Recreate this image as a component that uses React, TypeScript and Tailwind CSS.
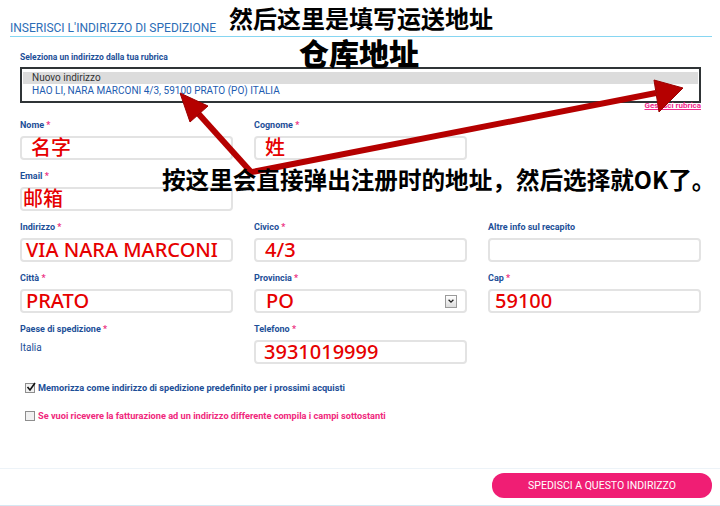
import React from "react";

const UI = { fontFamily: "Roboto, 'Liberation Sans', sans-serif" };
const CJK = { fontFamily: "'Noto Sans CJK SC', 'Noto Sans', sans-serif" };
const TYPED = { fontFamily: "'Noto Sans', 'Noto Sans CJK SC', sans-serif" };

function Label({ text, required = true }: { text: string; required?: boolean }) {
  return (
    <div className="mb-[5px] h-[12px] text-[9px] font-bold leading-[12px] text-[#1d4f98]">
      {text}
      {required && <span className="text-[#ec2f82]"> *</span>}
    </div>
  );
}

function Field({
  label,
  value,
  pad = "pl-[6px]",
  required = true,
  select,
}: {
  label: string;
  value?: string;
  pad?: string;
  required?: boolean;
  select?: boolean;
}) {
  return (
    <div>
      <Label text={label} required={required} />
      <div
        className={`flex h-[24px] items-center rounded-[4px] border-2 border-[#e3e3e3] bg-white ${pad} pr-[8px]`}
      >
        <span
          className="flex-1 whitespace-nowrap text-[20px] font-medium leading-[20px] text-[#e60000]"
          style={TYPED}
        >
          {value}
        </span>
        {select && (
          <span className="flex h-[13px] w-[12px] items-center justify-center border border-[#9a9a9a] bg-gradient-to-b from-white to-[#dcdcdc]">
            <svg viewBox="0 0 10 10" className="h-[8px] w-[8px]" fill="none" stroke="#222" strokeWidth="1.6">
              <path d="M2 3.5 L5 6.5 L8 3.5" />
            </svg>
          </span>
        )}
      </div>
    </div>
  );
}

function Check({ checked, text, color }: { checked?: boolean; text: string; color: string }) {
  return (
    <div className="flex items-center gap-[3px] pl-[5px]">
      <span className="relative h-[10px] w-[10px] border border-[#8e8e8e] bg-[#f1f1f1]">
        {checked && (
          <svg viewBox="0 0 10 10" className="absolute -top-[2px] left-0 h-[10px] w-[10px]" fill="none" stroke="#111" strokeWidth="1.6">
            <path d="M1.5 5 L4 8 L9 1" />
          </svg>
        )}
      </span>
      <span className={`text-[9.2px] font-bold leading-[12px] ${color}`}>{text}</span>
    </div>
  );
}

function Arrows() {
  return (
    <svg className="pointer-events-none absolute inset-0" width="720" height="506" viewBox="0 0 720 506">
      <g fill="#b50000" stroke="#9a0000" strokeWidth="1">
        <line x1="251" y1="172" x2="196" y2="111" stroke="#b50000" strokeWidth="6" />
        <polygon points="180,93 208,106 190,122" />
        <line x1="247" y1="173" x2="656" y2="93" stroke="#b50000" strokeWidth="6" />
        <polygon points="683,88 654,80 659,112" />
      </g>
    </svg>
  );
}

export default function App() {
  return (
    <div className="relative flex h-[506px] w-[720px] flex-col overflow-hidden bg-white" style={UI}>
      {/* header */}
      <div className="ml-[10px] mr-[8px] mt-[21px] border-b border-[#86d6f2]">
        <div className="text-[12px] leading-[15px] text-[#2c6db6]">
          INSERISCI L'INDIRIZZO DI SPEDIZIONE
        </div>
      </div>

      <div className="px-[19px] pl-[20px] pt-[14px]">
        <div className="mb-[4px] h-[12px] text-[8.5px] font-bold leading-[12px] text-[#1d4f98]">
          Seleziona un indirizzo dalla tua rubrica
        </div>
        <div className="h-[36px] border-2 border-[#2f3436] px-[1px] pt-[3px]">
          <div className="h-[12px] bg-[#dcdcdc] pl-[9px] text-[10px] leading-[12px] text-[#333]">
            Nuovo indirizzo
          </div>
          <div className="h-[13px] pl-[9px] text-[10px] leading-[13px] text-[#1d5cb0]">
            HAO LI, NARA MARCONI 4/3, 59100 PRATO (PO) ITALIA
          </div>
        </div>
        <div className="-mt-[1px] flex justify-end">
          <span className="text-[8px] font-bold leading-[8px] text-[#f0288c] underline">Gestisci rubrica</span>
        </div>

        <div className="mt-[9px] grid grid-cols-3 gap-x-[21px] gap-y-[10px]">
          <Field label="Nome" value="名字" pad="pl-[9px]" />
          <Field label="Cognome" value="姓" pad="pl-[9px]" />
          <div />
          <Field label="Email" value="邮箱" pad="pl-[1px]" />
          <div />
          <div />
          <Field label="Indirizzo" value="VIA NARA MARCONI" pad="pl-[4px]" />
          <Field label="Civico" value="4/3" pad="pl-[9px]" />
          <Field label="Altre info sul recapito" required={false} />
          <Field label="Città" value="PRATO" pad="pl-[4px]" />
          <Field label="Provincia" value="PO" pad="pl-[10px]" select />
          <Field label="Cap" value="59100" pad="pl-[5px]" />
          <div>
            <Label text="Paese di spedizione" />
            <div className="pt-[1px] text-[10px] leading-[14px] text-[#1d4f98]">Italia</div>
          </div>
          <Field label="Telefono" value="3931019999" pad="pl-[8px]" />
          <div />
        </div>

        <div className="mt-[18px] flex flex-col gap-[16px]">
          <Check checked text="Memorizza come indirizzo di spedizione predefinito per i prossimi acquisti" color="text-[#1d4f98]" />
          <Check text="Se vuoi ricevere la fatturazione ad un indirizzo differente compila i campi sottostanti" color="text-[#f0287c]" />
        </div>
      </div>

      <div className="flex-1" />

      <div className="border-b border-t border-b-[#d6e7f2] border-t-[#edf3f8] pb-[7px] pt-[4px]">
        <div className="flex justify-end pr-[8px]">
          <button className="flex h-[25px] w-[220px] items-center justify-center rounded-[12px] bg-[#f01e74] text-[10.5px] text-white">
            SPEDISCI A QUESTO INDIRIZZO
          </button>
        </div>
      </div>

      <Arrows />

      {/* annotations */}
      <div className="absolute left-[229px] top-[5px] text-[24px] font-bold leading-[25px] text-black" style={CJK}>
        然后这里是填写运送地址
      </div>
      <div className="absolute left-[299px] top-[37px] text-[30px] font-black leading-[31px] text-black" style={CJK}>
        仓库地址
      </div>
      <div className="absolute left-[162px] top-[166px] whitespace-nowrap text-[23.6px] font-bold leading-[26px] text-black" style={CJK}>
        按这里会直接弹出注册时的地址，然后选择就OK了。
      </div>
    </div>
  );
}
